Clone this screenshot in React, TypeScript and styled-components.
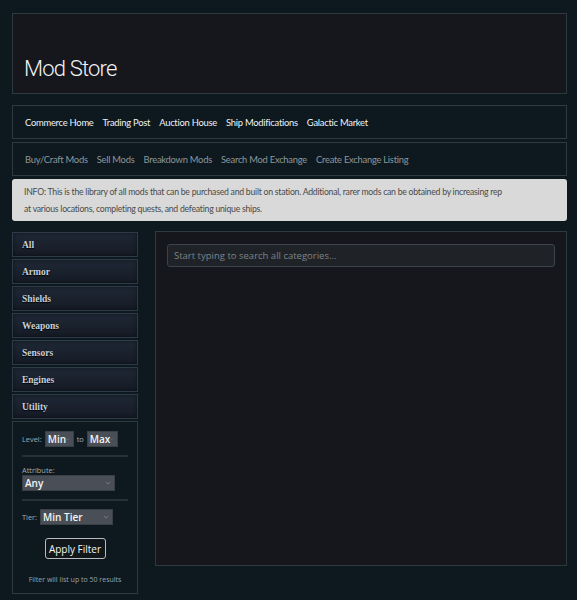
import styled, { createGlobalStyle } from "styled-components";

const GlobalStyle = createGlobalStyle`
  html, body {
    margin: 0;
    padding: 0;
    background: #0d191e;
  }
  body {
    font-family: Lato, "Open Sans", sans-serif;
    color: #e8eaec;
  }
`;

const mainLinks = ["Commerce Home", "Trading Post", "Auction House", "Ship Modifications", "Galactic Market"];
const subLinks = ["Buy/Craft Mods", "Sell Mods", "Breakdown Mods", "Search Mod Exchange", "Create Exchange Listing"];
const categories = ["All", "Armor", "Shields", "Weapons", "Sensors", "Engines", "Utility"];

export default function App() {
  return (
    <Page>
      <GlobalStyle />
      <Header>
        <h1>Mod Store</h1>
      </Header>
      <NavBar>
        {mainLinks.map((l) => (
          <NavLink key={l}>{l}</NavLink>
        ))}
      </NavBar>
      <NavBar $sub>
        {subLinks.map((l) => (
          <NavLink key={l} $sub>
            {l}
          </NavLink>
        ))}
      </NavBar>
      <Info>
        INFO: This is the library of all mods that can be purchased and built on station. Additional, rarer mods can be
        obtained by increasing rep at various locations, completing quests, and defeating unique ships.
      </Info>
      <Body>
        <Sidebar>
          {categories.map((c) => (
            <CategoryButton key={c}>{c}</CategoryButton>
          ))}
          <FilterPanel>
            <FilterRow>
              <Label>Level:</Label>
              <Select $w={29}>Min</Select>
              <Label>to</Label>
              <Select $w={31}>Max</Select>
            </FilterRow>
            <Rule />
            <FilterColumn>
              <Label>Attribute:</Label>
              <Select $w={93}>Any</Select>
            </FilterColumn>
            <Rule />
            <FilterRow>
              <Label>Tier:</Label>
              <Select $w={73}>Min Tier</Select>
            </FilterRow>
            <ApplyButton>Apply Filter</ApplyButton>
            <Note>Filter will list up to 50 results</Note>
          </FilterPanel>
        </Sidebar>
        <MainPanel>
          <Search placeholder="Start typing to search all categories..." />
        </MainPanel>
      </Body>
    </Page>
  );
}

function Select({ children, $w }: { children: string; $w: number }) {
  return (
    <SelectBox $w={$w}>
      <span>{children}</span>
      <Chevron viewBox="0 0 8 5">
        <path d="M1 1l3 3 3-3" fill="none" stroke="#8a9097" strokeWidth="0.9" />
      </Chevron>
    </SelectBox>
  );
}

const Page = styled.div`
  padding: 13px 10px 8px 12px;
  display: flex;
  flex-direction: column;
`;

const Header = styled.div`
  height: 79px;
  background: #15171c;
  border: 1px solid #2d3a40;
  display: flex;
  align-items: flex-end;
  h1 {
    margin: 0 0 12px 11px;
    font-family: Roboto, sans-serif;
    font-weight: 300;
    font-size: 22px;
    letter-spacing: -0.8px;
    color: #f2f2f4;
  }
`;

const NavBar = styled.div<{ $sub?: boolean }>`
  margin-top: ${(p) => (p.$sub ? 3 : 11)}px;
  height: 32px;
  border: 1px solid #2d3a40;
  display: flex;
  align-items: center;
  gap: 9px;
  padding: 0 12px;
`;

const NavLink = styled.span<{ $sub?: boolean }>`
  font-size: 9.4px;
  letter-spacing: -0.25px;
  color: ${(p) => (p.$sub ? "#8e979c" : "#f0f2f4")};
`;

const Info = styled.div`
  margin-top: 3px;
  background: #d9d9d9;
  border-radius: 3px;
  padding: 4px 58px 4px 12px;
  font-size: 8.7px;
  line-height: 17px;
  color: #4a4a4a;
  letter-spacing: -0.25px;
`;

const Body = styled.div`
  margin-top: 10px;
  display: flex;
  align-items: flex-start;
  gap: 17px;
`;

const Sidebar = styled.div`
  width: 126px;
  margin-top: 1px;
  display: flex;
  flex-direction: column;
  gap: 2px;
`;

const CategoryButton = styled.div`
  height: 23px;
  border: 1px solid #2d3a48;
  background: linear-gradient(#1f2836, #151b25);
  box-shadow: inset 0 0 4px rgba(0, 0, 0, 0.5);
  display: flex;
  align-items: center;
  padding-left: 9px;
  font-family: "Liberation Serif", serif;
  font-weight: bold;
  font-size: 9.5px;
  color: #c6cfda;
  text-shadow: 0 1px 1px #000;
`;

const FilterPanel = styled.div`
  border: 1px solid #2d3a40;
  padding: 9px 9px 8px 9px;
  display: flex;
  flex-direction: column;
  font-family: "Open Sans", sans-serif;
`;

const FilterRow = styled.div`
  display: flex;
  align-items: center;
  gap: 3px;
`;

const FilterColumn = styled.div`
  display: flex;
  flex-direction: column;
  align-items: flex-start;
`;

const Label = styled.span`
  font-size: 7.4px;
  line-height: 10px;
  color: #a3acb1;
`;

const SelectBox = styled.div<{ $w: number }>`
  width: ${(p) => p.$w}px;
  height: 16px;
  box-sizing: border-box;
  background: #4a4f57;
  border: 1px solid #3a3f46;
  display: flex;
  align-items: center;
  justify-content: space-between;
  padding: 0 3px 0 2px;
  font-size: 10px;
  font-weight: 600;
  color: #f4f4f4;
`;

const Chevron = styled.svg`
  width: 6px;
  height: 4px;
`;

const Rule = styled.div`
  height: 2px;
  background: #243238;
  margin: 8px 0;
`;

const ApplyButton = styled.div`
  align-self: center;
  margin-top: 13px;
  width: 61px;
  height: 21px;
  box-sizing: border-box;
  border: 1px solid #b8bcc0;
  border-radius: 3px;
  background: #12171b;
  display: flex;
  align-items: center;
  justify-content: center;
  font-size: 10px;
  color: #f4f4f4;
`;

const Note = styled.div`
  margin-top: 16px;
  line-height: 10px;
  text-align: center;
  font-size: 7px;
  color: #9aa3a8;
`;

const MainPanel = styled.div`
  flex: 1;
  height: 311px;
  background: #15171c;
  border: 1px solid #2d3a40;
  padding: 11px 11px;
`;

const Search = styled.input`
  width: 100%;
  height: 23px;
  box-sizing: border-box;
  background: #1f2328;
  border: 1px solid #3c434b;
  border-radius: 3px;
  padding: 0 6px;
  font-family: "Open Sans", sans-serif;
  font-size: 9.5px;
  color: #ddd;
  outline: none;
  &::placeholder {
    color: #7c8388;
  }
`;
